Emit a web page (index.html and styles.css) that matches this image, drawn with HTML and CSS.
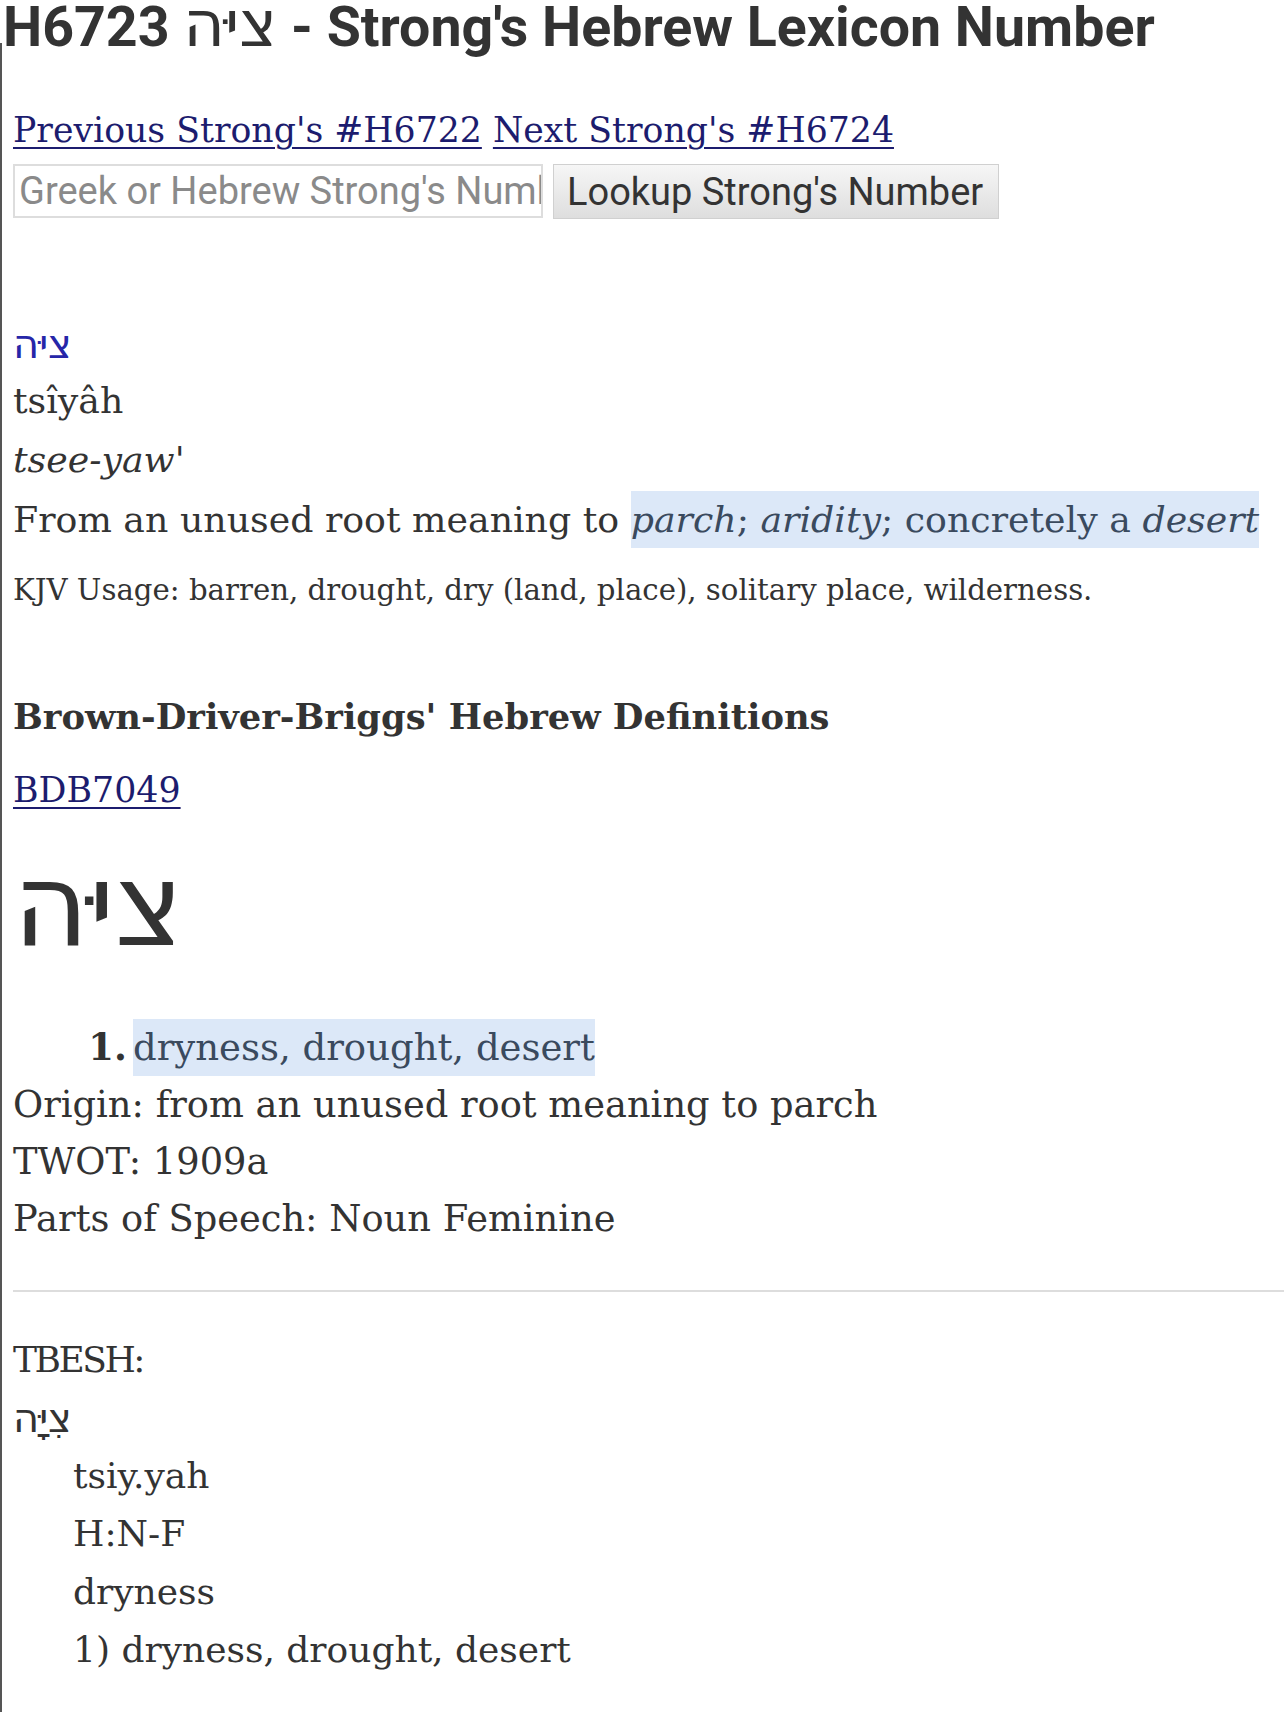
FILE: index.html
```html
<!DOCTYPE html>
<html lang="en">
<head>
<meta charset="utf-8">
<title>H6723 ציּה - Strong's Hebrew Lexicon Number</title>
<link rel="stylesheet" href="styles.css">
</head>
<body>
<h1 class="title">H6723 <span class="title-heb" dir="rtl">ציּה</span> - Strong's Hebrew Lexicon Number</h1>
<main class="page">
  <nav class="pager"><a href="#">Previous Strong's #H6722</a> <a href="#">Next Strong's #H6724</a></nav>
  <form class="lookup">
    <input class="lookup-input" type="text" placeholder="Greek or Hebrew Strong's Number">
    <button class="lookup-btn" type="button">Lookup Strong's Number</button>
  </form>
  <section class="entry">
    <a class="heb-link" href="#" dir="rtl">ציּה</a>
    <div class="line">tsîyâh</div>
    <div class="line"><i>tsee-yaw'</i></div>
    <div class="line">From an unused root meaning to <mark class="hl"><i>parch</i>; <i>aridity</i>; concretely a <i>desert</i></mark></div>
    <p class="kjv">KJV Usage: barren, drought, dry (land, place), solitary place, wilderness.</p>
  </section>
  <h2 class="bdb-title">Brown-Driver-Briggs' Hebrew Definitions</h2>
  <a class="bdb-link" href="#">BDB7049</a>
  <div class="big-heb" dir="rtl">ציּה</div>
  <ol class="defs"><li><mark class="hl">dryness, drought, desert</mark></li></ol>
  <div class="meta">
    <div>Origin: from an unused root meaning to parch</div>
    <div>TWOT: 1909a</div>
    <div>Parts of Speech: Noun Feminine</div>
  </div>
  <hr class="rule">
  <div class="tbesh">
    <div class="tbesh-label">TBESH:</div>
    <div class="tbesh-heb" dir="rtl">צִיָּה</div>
    <div class="tbesh-body">
      <div>tsiy.yah</div>
      <div>H:N-F</div>
      <div>dryness</div>
      <div>1) dryness, drought, desert</div>
    </div>
  </div>
</main>
</body>
</html>
```
FILE: styles.css
```css
html, body {
  margin: 0;
  padding: 0;
  background: #fff;
}
body {
  font-family: "DejaVu Serif", serif;
  color: #333;
  overflow: hidden;
  height: 1712px;
}
.title {
  margin: 0 0 -13px 0;
  padding-left: 3px;
  font-family: Roboto, "DejaVu Sans", sans-serif;
  font-weight: 700;
  font-size: 55.5px;
  line-height: 56px;
  white-space: nowrap;
  color: #333;
}
.title-heb {
  font-family: "DejaVu Sans", sans-serif;
  font-weight: 400;
  font-size: 1.15em;
  line-height: 0;
}
.page {
  display: flow-root;
  border-left: 2px solid #555;
  padding-left: 11px;
  min-height: 1700px;
}
.pager {
  margin-top: 67px;
  font-size: 34.7px;
  line-height: 40px;
  white-space: nowrap;
}
.pager a, .bdb-link {
  color: #1c1c6e;
  text-decoration: underline;
  text-decoration-thickness: 2px;
  text-underline-offset: 5px;
}
.lookup {
  display: flex;
  gap: 10px;
  margin: 14px 0 0 0;
  height: 55px;
}
.lookup-input {
  box-sizing: border-box;
  width: 530px;
  height: 54px;
  margin: 0;
  padding: 0 0 0 4px;
  border: 2px solid #ddd;
  font-family: Roboto, sans-serif;
  font-size: 38px;
  color: #333;
  background: #fff;
}
.lookup-input::placeholder {
  color: #8a8a8a;
}
.lookup-btn {
  box-sizing: border-box;
  width: 446px;
  height: 55px;
  margin: 0;
  padding: 0 13px;
  border: 1px solid #d0d0d0;
  background: linear-gradient(#f6f6f6, #dedede);
  font-family: Roboto, sans-serif;
  font-size: 38px;
  color: #333;
  text-align: left;
  white-space: nowrap;
}
.entry {
  margin-top: 105px;
}
.heb-link {
  display: block;
  width: max-content;
  font-family: "DejaVu Sans", sans-serif;
  font-size: 40px;
  line-height: 40px;
  color: #2626a8;
  text-decoration: none;
}
.line {
  font-size: 36.3px;
  line-height: 59.5px;
  white-space: nowrap;
}
.line:first-of-type {
  margin-top: 6.5px;
}
.hl {
  background: #dce8f8;
  color: #3a4a5e;
  padding: 7px 0;
}
.kjv {
  margin: 21px 0 0 0;
  font-size: 29.2px;
  line-height: 40px;
  white-space: nowrap;
}
.bdb-title {
  margin: 87px 0 0 0;
  font-size: 35.3px;
  line-height: 40px;
  font-weight: 700;
  white-space: nowrap;
}
.bdb-link {
  display: block;
  width: max-content;
  margin-top: 31px;
  font-size: 34.8px;
  line-height: 44px;
}
.big-heb {
  width: max-content;
  margin-top: 43px;
  font-family: "DejaVu Sans", sans-serif;
  font-size: 116px;
  line-height: 100px;
}
.defs {
  margin: 64px 0 0 0;
  padding-left: 120px;
  font-size: 37px;
  line-height: 56px;
}
.defs li::marker {
  content: counter(list-item) ".\2006";
  font-weight: 700;
}
.meta {
  font-size: 36.8px;
  line-height: 57px;
  white-space: nowrap;
}
.rule {
  margin: 43px 0 0 0;
  border: 0;
  height: 2px;
  background: #ddd;
}
.tbesh {
  margin-top: 38.5px;
  font-size: 36px;
  line-height: 58px;
}
.tbesh-label {
  letter-spacing: -2.5px;
}
.tbesh-heb {
  width: max-content;
  font-family: "DejaVu Sans", sans-serif;
  font-size: 40px;
}
.tbesh-body {
  padding-left: 60px;
}
```
